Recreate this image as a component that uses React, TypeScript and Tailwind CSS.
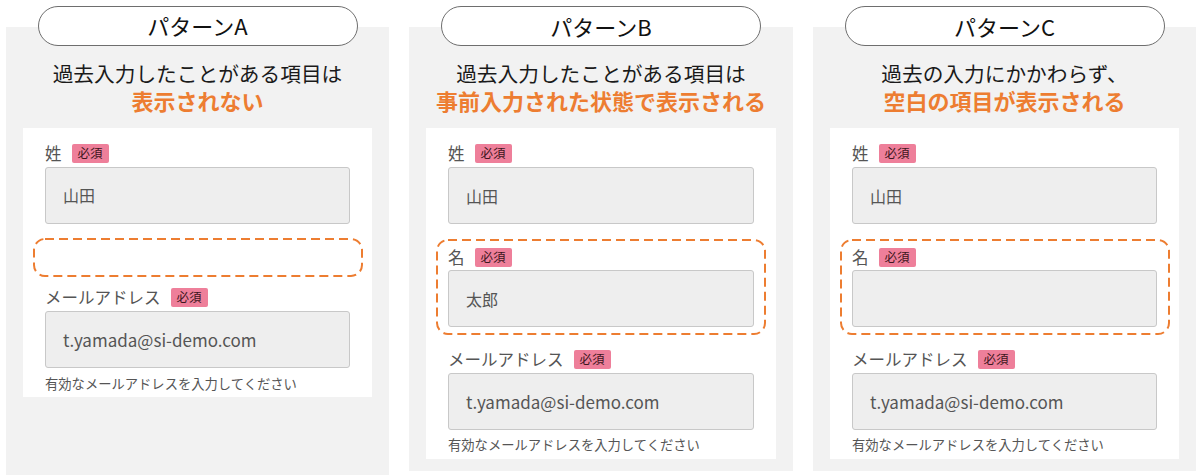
import React from 'react';

const jp = { fontFamily: '"Noto Sans CJK JP", "Noto Sans", sans-serif' };

type Pattern = {
  key: string;
  title: string;
  lead: string;
  emphasis: string;
  firstName: 'none' | 'filled' | 'empty';
  panelHeight: string;
};

const patterns: Pattern[] = [
  {
    key: 'A',
    title: 'パターンA',
    lead: '過去入力したことがある項目は',
    emphasis: '表示されない',
    firstName: 'none',
    panelHeight: 'h-[449px]',
  },
  {
    key: 'B',
    title: 'パターンB',
    lead: '過去入力したことがある項目は',
    emphasis: '事前入力された状態で表示される',
    firstName: 'filled',
    panelHeight: 'h-[444px]',
  },
  {
    key: 'C',
    title: 'パターンC',
    lead: '過去の入力にかかわらず、',
    emphasis: '空白の項目が表示される',
    firstName: 'empty',
    panelHeight: 'h-[444px]',
  },
];

const Required = () => (
  <span className="ml-[10px] inline-flex h-[19px] items-center rounded-[2px] bg-[#ee7f9a] px-[6px] text-[12.5px] leading-none text-[#3d1620]">
    必須
  </span>
);

const FieldLabel = ({ text }: { text: string }) => (
  <div className="flex h-[19px] items-center text-[16.5px] leading-none text-[#555]">
    <span>{text}</span>
    <Required />
  </div>
);

const Input = ({ value, className = '' }: { value?: string; className?: string }) => (
  <div
    className={`flex h-[57px] items-center rounded-[3px] border border-[#c8c8c8] bg-[#eeeeee] pl-[17px] text-[16px] text-[#555] ${className}`}
  >
    {value}
  </div>
);

// dashed orange highlight drawn as svg so the dash length matches the slide
const Highlight = ({ w, h, children, className = '' }: { w: number; h: number; children?: React.ReactNode; className?: string }) => (
  <div className={`relative -mx-[12px] ${className}`} style={{ height: h }}>
    <svg className="absolute inset-0" width={w} height={h} viewBox={`0 0 ${w} ${h}`}>
      <rect
        x="1"
        y="1"
        width={w - 2}
        height={h - 2}
        rx="11"
        fill="none"
        stroke="#ed7d31"
        strokeWidth="2"
        strokeDasharray="9 5"
      />
    </svg>
    <div className="relative px-[12px] pt-[9px]">{children}</div>
  </div>
);

const FormCard = ({ mode }: { mode: Pattern['firstName'] }) => (
  <div className="mx-[17px] mt-[15px] bg-white px-[22px] pb-[6px] pt-[16px]">
    <FieldLabel text="姓" />
    <Input value="山田" className="mt-[4px]" />

    {mode === 'none' ? (
      <Highlight w={330} h={39} className="mt-[14px]" />
    ) : (
      <Highlight w={330} h={96} className="mt-[15px]">
        <FieldLabel text="名" />
        <Input value={mode === 'filled' ? '太郎' : ''} className="mt-[3px]" />
      </Highlight>
    )}

    <div className={mode === 'none' ? 'mt-[11px]' : 'mt-[15px]'}>
      <FieldLabel text="メールアドレス" />
    </div>
    <Input value="t.yamada@si-demo.com" className="mt-[4px] text-[17px]" />
    <div className={`text-[13.3px] leading-[14px] text-[#555] ${mode === 'none' ? 'mt-[9px]' : 'mt-[8px] pb-[1px]'}`}>
      有効なメールアドレスを入力してください
    </div>
  </div>
);

const Column = ({ p, width }: { p: Pattern; width: string }) => (
  <div className={`flex flex-col items-center ${width}`}>
    <div className="relative z-10 mt-[6px] flex h-[40px] w-[320px] items-center justify-center rounded-full border-[1.5px] border-[#6e6e6e] bg-white text-[22px] text-[#111]">
      {p.title}
    </div>
    <div className={`-mt-[19px] w-full bg-[#f2f2f2] pt-[33px] ${p.panelHeight}`}>
      <div className="text-center">
        <div className="text-[20.7px] leading-[27px] text-[#1a1a1a]">{p.lead}</div>
        <div className="text-[22px] font-bold leading-[26px] text-[#ed7d31]">{p.emphasis}</div>
      </div>
      <FormCard mode={p.firstName} />
    </div>
  </div>
);

export default function App() {
  return (
    <div className="flex h-[475px] w-[1200px] gap-[20px] overflow-hidden bg-white pl-[6px]" style={jp}>
      <Column p={patterns[0]} width="w-[383px]" />
      <Column p={patterns[1]} width="w-[384px]" />
      <Column p={patterns[2]} width="w-[383px]" />
    </div>
  );
}
